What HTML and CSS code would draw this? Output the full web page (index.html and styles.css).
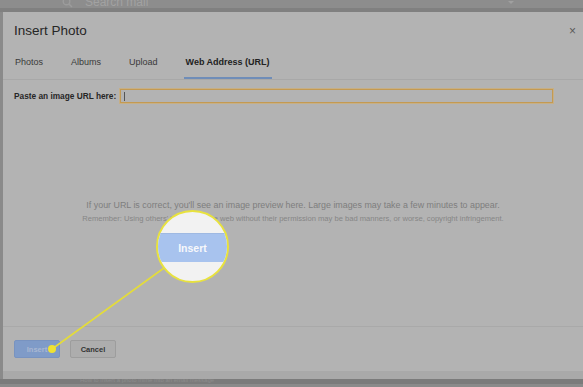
FILE: index.html
```html
<!DOCTYPE html>
<html>
<head>
<meta charset="utf-8">
<title>Insert Photo</title>
<link rel="stylesheet" href="styles.css">
</head>
<body>
<div class="topbar">
  <svg class="search-icon" width="11" height="11" viewBox="0 0 11 11"><circle cx="4.5" cy="4.5" r="3.3" fill="none" stroke="#9c9c9c" stroke-width="1.4"/><line x1="7" y1="7" x2="10" y2="10" stroke="#9c9c9c" stroke-width="1.5"/></svg>
  <span class="search-text">Search mail</span>
  <span class="search-caret"></span>
</div>
<div class="dialog">
  <div class="dlg-head">
    <h1 class="dlg-title">Insert Photo</h1>
    <span class="dlg-close">×</span>
  </div>
  <div class="tabs">
    <span class="tab">Photos</span>
    <span class="tab">Albums</span>
    <span class="tab">Upload</span>
    <span class="tab active">Web Address (URL)</span>
  </div>
  <div class="url-row">
    <label class="url-label">Paste an image URL here:</label>
    <div class="url-input"><span class="cursor"></span></div>
  </div>
  <div class="preview">
    <p class="hint">If your URL is correct, you'll see an image preview here. Large images may take a few minutes to appear.</p>
    <p class="note">Remember: Using others' images on the web without their permission may be bad manners, or worse, copyright infringement.</p>
  </div>
  <div class="dlg-foot">
    <button class="btn btn-insert">Insert</button>
    <button class="btn btn-cancel">Cancel</button>
  </div>
</div>
<div class="under-strip"></div>
<div class="bottom-bar"><span class="bottom-text">How to insert a photo inline into an email message</span></div>

<!-- callout over the page -->
<svg class="callout" width="583" height="387" viewBox="0 0 583 387">
  <line x1="164" y1="268" x2="52" y2="349" stroke="#e4dc3a" stroke-width="1.6"/>
  <circle cx="52" cy="349" r="4" fill="#efe232"/>
</svg>
<div class="magnifier">
  <div class="mag-band">Insert</div>
</div>
</body>
</html>
```

FILE: styles.css
```css
html,body{margin:0;padding:0;}
body{width:583px;height:387px;overflow:hidden;background:#8a8a8a;font-family:"Liberation Sans",Arial,sans-serif;position:relative;}

.topbar{height:12px;background:linear-gradient(#8d8d8d 0,#8d8d8d 8px,#808080 8px);display:flex;align-items:flex-start;overflow:hidden;}
.search-icon{margin:-3px 0 0 62px;}
.search-text{margin:-4px 0 0 12px;font-size:12px;line-height:12px;color:#a2a2a2;}
.search-caret{margin:1px 0 0 360px;width:0;height:0;border-left:3px solid transparent;border-right:3px solid transparent;border-top:3px solid #a0a0a0;}

.dialog{margin-left:3px;width:580px;height:359px;background:#b3b3b3;display:flex;flex-direction:column;}
.dlg-head{display:flex;align-items:center;justify-content:space-between;padding:11px 7px 0 11px;height:16px;}
.dlg-title{margin:0;font-size:13.5px;font-weight:normal;line-height:16px;color:#262626;}
.dlg-close{font-size:12px;line-height:16px;color:#5a5a5a;}

.tabs{display:flex;gap:24px;padding:17px 0 0 10px;border-bottom:1px solid #a8a8a8;}
.tab{padding:0 2px 9px;font-size:9px;line-height:12px;color:#3a3a3a;border-bottom:2px solid transparent;}
.tab.active{font-weight:bold;color:#222;border-bottom-color:#6f8db8;}

.url-row{display:flex;align-items:center;gap:4px;margin-top:9px;padding:0 30px 0 11px;}
.url-label{font-size:8.3px;font-weight:bold;color:#262626;}
.url-input{flex:1;height:12px;border:1px solid #c49a52;box-shadow:0 0 0 1px rgba(214,172,96,.55);display:flex;align-items:center;}
.cursor{margin-left:3px;width:1px;height:9px;background:#555;}

.preview{flex:1;padding-top:96px;text-align:center;}
.hint{margin:0;font-size:8.9px;line-height:12px;color:#7e7e7e;}
.note{margin:2px 0 0;font-size:7.6px;line-height:12px;color:#868686;}

.dlg-foot{border-top:1px solid #a9a9a9;display:flex;align-items:flex-start;gap:10px;padding:13px 0 0 11px;box-sizing:border-box;height:45px;}
.btn{width:46px;height:18px;border-radius:2px;font-family:inherit;font-size:7.5px;font-weight:bold;padding:0;}
.btn-insert{background:#7f9bc8;border:1px solid #7893c0;color:#a9b8d2;}
.btn-cancel{background:#adadad;border:1px solid #9d9d9d;color:#333;}

.under-strip{margin-left:3px;height:8px;background:#a9a9a9;}
.bottom-bar{height:5px;background:#7b7b7b;overflow:hidden;}
.bottom-text{display:block;margin:-2px 0 0 80px;font-size:6px;line-height:7px;color:#8c8c8c;}

.callout{position:absolute;left:0;top:0;}
.magnifier{position:absolute;left:156px;top:210px;width:69px;height:69px;border:2px solid #e8e23e;border-radius:50%;background:#f2f2f2;overflow:hidden;}
.mag-band{margin-top:21px;height:28px;background:#a8c3ee;border-top:1px solid #9fb9e2;color:#f7f8fb;font-size:10.5px;font-weight:bold;line-height:28px;text-align:center;}
```
